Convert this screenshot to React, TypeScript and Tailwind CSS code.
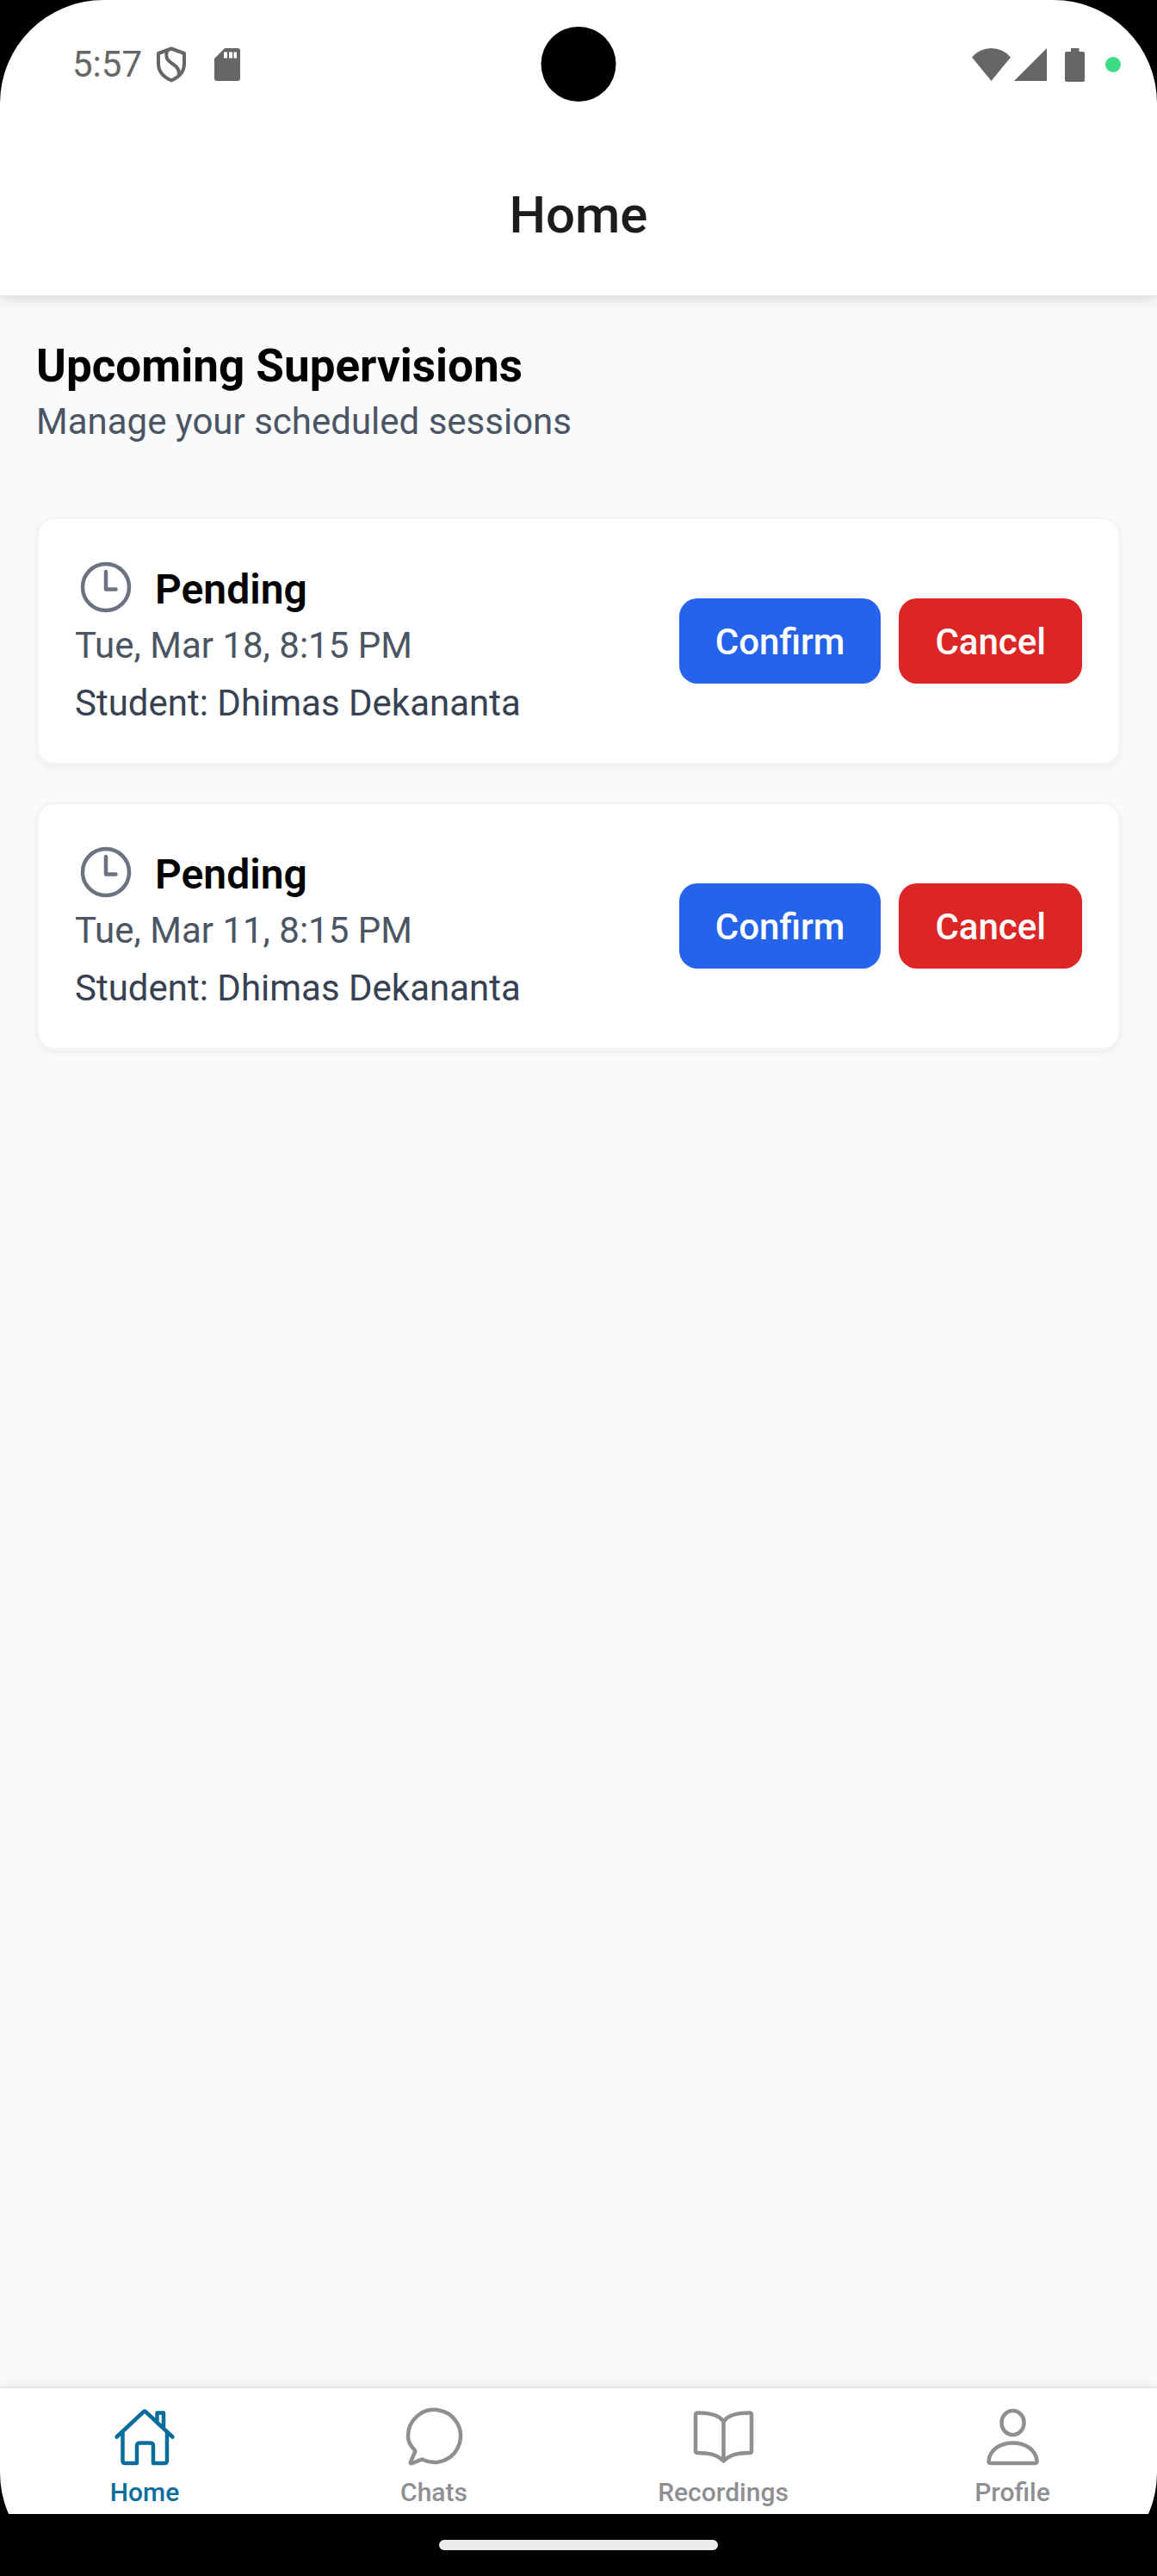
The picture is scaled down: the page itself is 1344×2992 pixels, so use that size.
import { type ReactNode } from 'react';

type Session = { status: string; date: string; student: string };

const sessions: Session[] = [
  { status: 'Pending', date: 'Tue, Mar 18, 8:15 PM', student: 'Dhimas Dekananta' },
  { status: 'Pending', date: 'Tue, Mar 11, 8:15 PM', student: 'Dhimas Dekananta' },
];

function StatusBar() {
  return (
    <div className="relative flex h-[150px] items-center justify-between pr-[42px] pl-[84px] text-[#666666]">
      <div className="flex items-center">
        <span className="text-[42px] leading-[48px]">5:57</span>
        <svg className="ml-4 h-[42px] w-9" viewBox="0 0 36 42" fill="none" stroke="currentColor" strokeWidth="4" strokeLinejoin="round" aria-hidden="true">
          <path d="M18 2.5 33 8V20C33 29 27 35.5 18 39.500C9 35.500 3 29 3 20V8Z" />
          <path d="M13 5C11 13 13 16 20 20.500C26 24.500 28 28 26.500 33" />
        </svg>
        <svg className="ml-8 h-[38px] w-[30px]" viewBox="0 0 30 38" fill="currentColor" aria-hidden="true">
          <path fillRule="evenodd" d="M12 0H27Q30 0 30 3V35Q30 38 27 38H3Q0 38 0 35V12ZM11 4.500V11.500H15V4.500ZM17 4.500V11.500H21V4.500ZM22.500 4.500V11.500H26V4.500Z" />
        </svg>
      </div>
      <div className="absolute top-[31px] left-1/2 size-[87px] -translate-x-1/2 rounded-full bg-black" />
      <div className="flex items-center">
        <svg className="h-[38px] w-[45px]" viewBox="0 0 45 38" fill="currentColor" aria-hidden="true">
          <path d="M0 10.500Q9 0 22.500 0T45 10.500L22.500 38Z" />
        </svg>
        <svg className="ml-1 h-[38px] w-[38px]" viewBox="0 0 38 38" fill="currentColor" aria-hidden="true">
          <path d="M0 38 38 0V38Z" />
        </svg>
        <svg className="ml-[21px] h-[39px] w-[23px]" viewBox="0 0 23 39" fill="currentColor" aria-hidden="true">
          <path d="M7 0H16.500V4H21Q23 4 23 6V37Q23 39 21 39H2Q0 39 0 37V6Q0 4 2 4H7Z" />
        </svg>
        <span className="ml-6 size-[18px] rounded-full bg-[#3ddc84]" />
      </div>
    </div>
  );
}

function ClockIcon() {
  return (
    <svg className="size-[72px] shrink-0 text-[#6b7280]" viewBox="0 0 72 72" fill="none" stroke="currentColor" strokeWidth="4.5" strokeLinecap="round" strokeLinejoin="round" aria-hidden="true">
      <circle cx="36" cy="36" r="27" />
      <path d="M36 18V38.500H47.500" />
    </svg>
  );
}

function SessionCard({ session }: { session: Session }) {
  return (
    <li className="flex items-center justify-between rounded-[21px] border-[3px] border-[#f3f4f6] bg-white p-[42px] shadow-[0_3px_6px_rgba(0,0,0,0.05)]">
      <div>
        <div className="flex h-[74px] items-center gap-[21px]">
          <ClockIcon />
          <h2 className="pt-1.5 text-[48px] leading-[68px] font-semibold text-black">{session.status}</h2>
        </div>
        <p className="text-[42px] leading-[62px] text-[#4b5563]">{session.date}</p>
        <p className="mt-2 text-[42px] leading-[55px] text-[#374151]">Student: {session.student}</p>
      </div>
      <div className="flex gap-[21px] text-[42px] leading-[57px] font-medium text-white">
        <button type="button" className="rounded-[21px] bg-[#2563eb] px-[42px] pt-[22px] pb-5">Confirm</button>
        <button type="button" className="rounded-[21px] bg-[#dc2626] px-[42px] pt-[22px] pb-5">Cancel</button>
      </div>
    </li>
  );
}

function Tab({ label, active, children }: { label: string; active?: boolean; children: ReactNode }) {
  return (
    <a
      href={'#' + label.toLowerCase()}
      aria-current={active ? 'page' : undefined}
      className={'flex flex-1 flex-col items-center pt-[15px] ' + (active ? 'text-[#0a6c9b]' : 'text-[#8e8e93]')}
    >
      <svg className="size-[84px]" viewBox="0 0 84 84" fill="none" stroke="currentColor" strokeWidth="4.5" strokeLinecap="round" strokeLinejoin="round" aria-hidden="true">
        {children}
      </svg>
      <span className="text-[30px] leading-[44px] font-medium">{label}</span>
    </a>
  );
}

export default function App() {
  return (
    <div className="flex min-h-screen flex-col bg-black font-['Roboto',sans-serif]">
      <div className="flex flex-1 flex-col overflow-hidden rounded-[120px]">
        <header className="z-10 bg-white shadow-[0_3px_15px_rgba(0,0,0,0.17)]">
          <StatusBar />
          <h1 className="flex h-[193px] items-center justify-center pt-1.5 text-[60px] leading-[72px] font-medium text-[#1c1c1e]">Home</h1>
        </header>
        <main className="flex-1 bg-[#f9fafb] px-[42px] pt-[46px]">
          <h2 className="text-[53px] leading-[72px] font-bold text-black">Upcoming Supervisions</h2>
          <p className="text-[42px] leading-[58px] text-[#4b5563]">Manage your scheduled sessions</p>
          <ul className="mt-[81px] flex flex-col gap-[42px]">
            {sessions.map((s) => (
              <SessionCard key={s.date} session={s} />
            ))}
          </ul>
        </main>
        <nav className="flex h-[148px] border-t-2 border-[#e4e5e6] bg-white shadow-[0_0_15px_rgba(0,0,0,0.08)]">
          <Tab label="Home" active>
            <path d="M9.500 41.500 40.500 12.500Q42 11 43.500 12.500L74.500 41.500M16.500 36V69Q16.500 72 19.500 72H33V52Q33 48.500 36.500 48.500H48.500Q52 48.500 52 52V72H65Q68 72 68 69V36M56.500 23V13.500H64V30" />
          </Tab>
          <Tab label="Chats">
            <path d="M20 59Q20.500 58 19.500 56.500C15 52 12 46 12 41A30.500 30.500 0 1 1 29.500 68L28 67.500 17 72Q14.500 73 15 70.500Z" />
          </Tab>
          <Tab label="Recordings">
            <path d="M42.500 24C38 16 27 13.500 12.500 13.500Q10 13.500 10 16V57.500Q10 60 12.500 60C26 60 35 62 42.500 69.500C50 62 59 60 72.500 60Q75 60 75 57.500V16Q75 13.500 72.500 13.500C58 13.500 47 16 42.500 24V69" />
          </Tab>
          <Tab label="Profile">
            <ellipse cx="42.5" cy="25" rx="13" ry="14" />
            <path d="M16.500 72Q14 72 14.500 69C16 56 28 48.500 42.500 48.500S69 56 70.500 69Q71 72 68.500 72Z" />
          </Tab>
        </nav>
        <div className="z-10 flex h-[72px] items-center justify-center bg-black">
          <div className="h-3 w-[324px] rounded-full bg-[#ebebeb]" />
        </div>
      </div>
    </div>
  );
}
